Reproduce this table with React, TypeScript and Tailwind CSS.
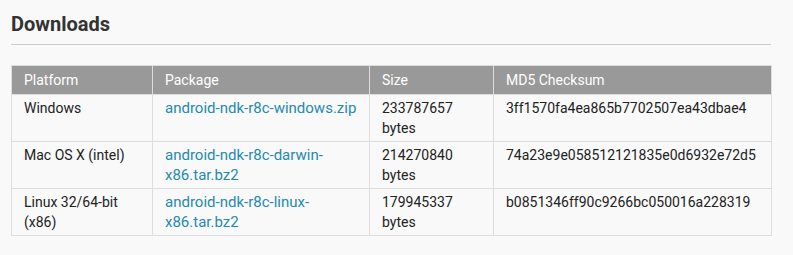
const rows = [
  {
    platform: "Windows",
    pkg: "android-ndk-r8c-windows.zip",
    size: "233787657 bytes",
    md5: "3ff1570fa4ea865b7702507ea43dbae4",
  },
  {
    platform: "Mac OS X (intel)",
    pkg: "android-ndk-r8c-darwin-x86.tar.bz2",
    size: "214270840 bytes",
    md5: "74a23e9e058512121835e0d6932e72d5",
  },
  {
    platform: "Linux 32/64-bit (x86)",
    pkg: "android-ndk-r8c-linux-x86.tar.bz2",
    size: "179945337 bytes",
    md5: "b0851346ff90c9266bc050016a228319",
  },
];

const App = () => {
  return (
    <div className="min-h-[255px] w-full bg-[#f9f9f9] font-['Roboto',sans-serif] text-[#222]">
      <div className="ml-[11px] w-[760px] pt-[10px]">
        <h2 className="text-[20px] font-bold leading-[28px] text-[#333]">Downloads</h2>
        <div className="mt-[6px] h-px bg-[#cccccc]" />

        <table className="mt-[20px] w-[760px] table-fixed border-collapse text-[14px] leading-5">
          <colgroup>
            <col className="w-[141px]" />
            <col className="w-[217px]" />
            <col className="w-[124px]" />
            <col className="w-[278px]" />
          </colgroup>
          <thead>
            <tr className="bg-[#999999] text-white">
              {["Platform", "Package", "Size", "MD5 Checksum"].map((h) => (
                <th
                  key={h}
                  className="border border-[#dddddd] px-[12px] pt-1 pb-1 text-left font-normal"
                >
                  {h}
                </th>
              ))}
            </tr>
          </thead>
          <tbody>
            {rows.map((r) => (
              <tr key={r.pkg} className="align-top">
                <td className="h-[47px] border border-[#dddddd] px-[12px] py-[3px]">{r.platform}</td>
                <td className="border border-[#dddddd] px-[12px] py-[3px] text-[15px]">
                  <a href="#" className="text-[#258aaf]">
                    {r.pkg}
                  </a>
                </td>
                <td className="border border-[#dddddd] px-[12px] py-[3px]">{r.size}</td>
                <td className="border border-[#dddddd] px-[12px] py-[3px]">{r.md5}</td>
              </tr>
            ))}
          </tbody>
        </table>
      </div>
    </div>
  );
};

export default App;
